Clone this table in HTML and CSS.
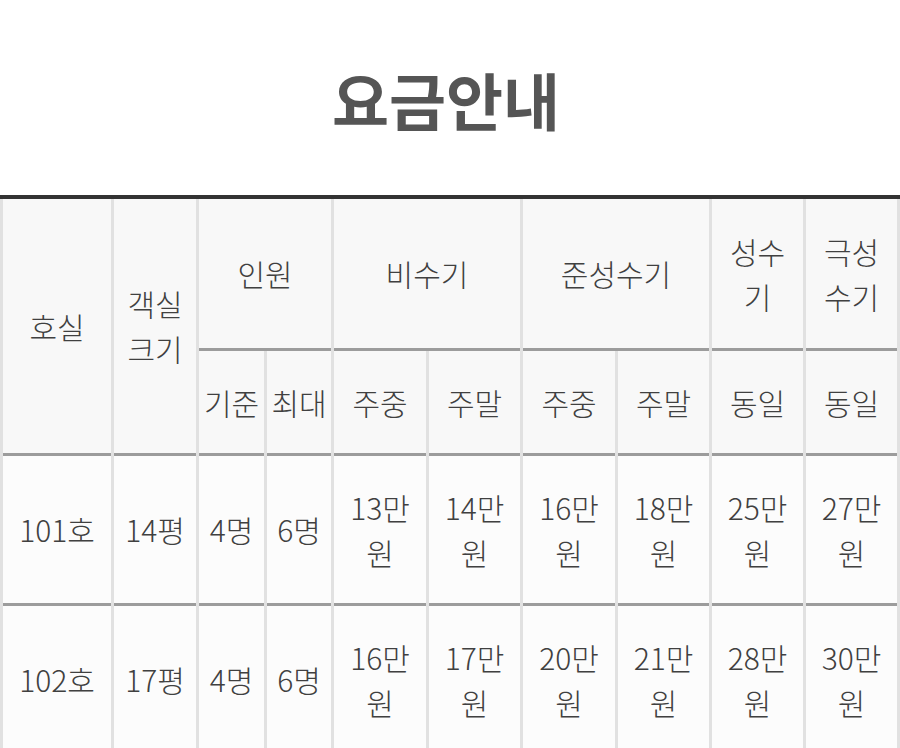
FILE: index.html
```html
<!DOCTYPE html>
<html lang="ko">
<head>
<meta charset="utf-8">
<link rel="stylesheet" href="styles.css">
</head>
<body>
<h1 class="title">요금안내</h1>
<table class="rates">
  <colgroup>
    <col class="c-room"><col class="c-size"><col class="c-p"><col class="c-p2">
    <col class="c-w"><col class="c-w2"><col class="c-w"><col class="c-w2"><col class="c-w2"><col class="c-w2">
  </colgroup>
  <thead>
    <tr class="h1row">
      <th rowspan="2">호실</th>
      <th rowspan="2">객실<br>크기</th>
      <th colspan="2">인원</th>
      <th colspan="2">비수기</th>
      <th colspan="2">준성수기</th>
      <th>성수<br>기</th>
      <th>극성<br>수기</th>
    </tr>
    <tr class="h2row">
      <th>기준</th><th>최대</th>
      <th>주중</th><th>주말</th>
      <th>주중</th><th>주말</th>
      <th>동일</th><th>동일</th>
    </tr>
  </thead>
  <tbody>
    <tr>
      <td>101호</td><td>14평</td><td>4명</td><td>6명</td>
      <td>13만<br>원</td><td>14만<br>원</td><td>16만<br>원</td><td>18만<br>원</td><td>25만<br>원</td><td>27만<br>원</td>
    </tr>
    <tr>
      <td>102호</td><td>17평</td><td>4명</td><td>6명</td>
      <td>16만<br>원</td><td>17만<br>원</td><td>20만<br>원</td><td>21만<br>원</td><td>28만<br>원</td><td>30만<br>원</td>
    </tr>
  </tbody>
</table>
</body>
</html>
```
FILE: styles.css
```css
html, body {
  margin: 0;
  padding: 0;
  background: #ffffff;
}
body {
  font-family: "Noto Sans CJK KR", "Noto Sans", sans-serif;
  color: #4a4a4a;
}
.title {
  margin: 69px 0 66px;
  padding-right: 8px;
  font-size: 62px;
  line-height: 60px;
  font-weight: 700;
  color: #555555;
  text-align: center;
}
.rates {
  width: 900px;
  table-layout: fixed;
  border-collapse: separate;
  border-spacing: 3px 0;
  background: #e1e1e1;
  border-top: 4px solid #333333;
  font-size: 30px;
  line-height: 45px;
}
.c-room { width: 108px; }
.c-size { width: 82px; }
.c-p { width: 65px; }
.c-p2 { width: 64px; }
.c-w { width: 92px; }
.c-w2 { width: 91px; }
.rates th,
.rates td {
  padding: 0 1px;
  text-align: center;
  vertical-align: middle;
  font-weight: 300;
  border-bottom: 3px solid #9c9c9c;
  color: #404040;
}
.rates th {
  background: #f8f8f8;
}
.rates td {
  background: #fcfcfc;
}
.h1row { height: 152px; }
.h2row { height: 105px; }
.rates tbody tr { height: 150px; }
```
